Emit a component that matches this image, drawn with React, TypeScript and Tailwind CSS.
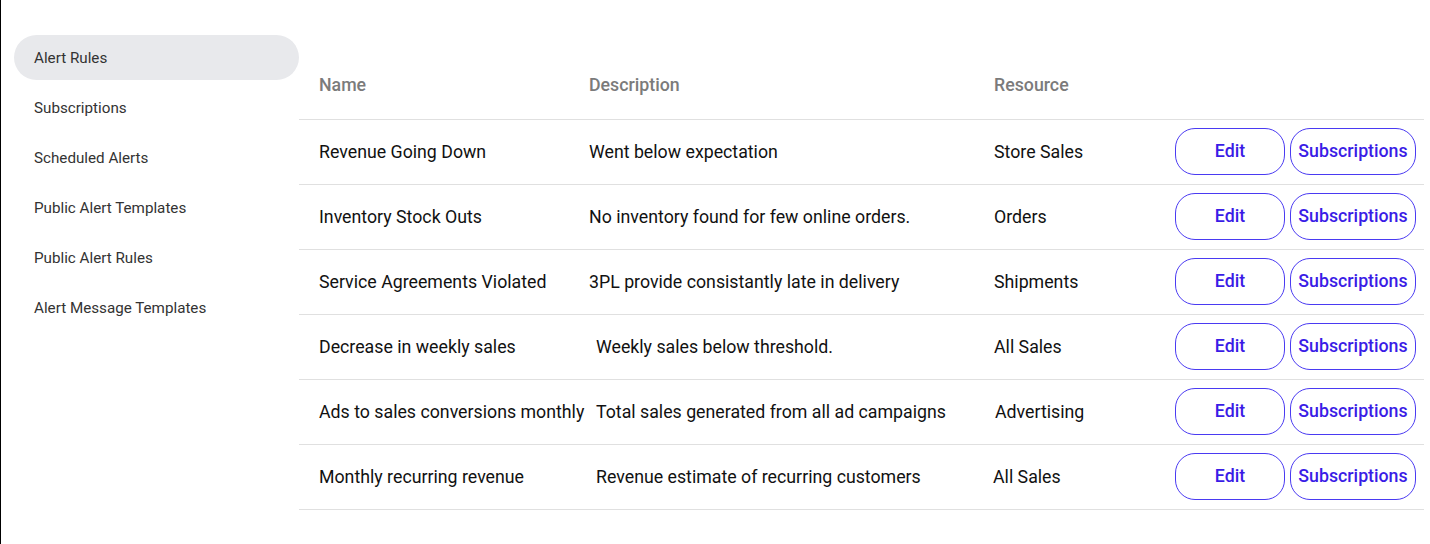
import React from 'react';

interface AlertRule {
  name: string;
  description: string;
  resource: string;
  descPad?: string;
  resPad?: string;
}

const navItems = [
  'Alert Rules',
  'Subscriptions',
  'Scheduled Alerts',
  'Public Alert Templates',
  'Public Alert Rules',
  'Alert Message Templates',
];

const rules: AlertRule[] = [
  { name: 'Revenue Going Down', description: 'Went below expectation', resource: 'Store Sales' },
  { name: 'Inventory Stock Outs', description: 'No inventory found for few online orders.', resource: 'Orders' },
  { name: 'Service Agreements Violated', description: '3PL provide consistantly late in delivery', resource: 'Shipments' },
  { name: 'Decrease in weekly sales', description: 'Weekly sales below threshold.', resource: 'All Sales', descPad: 'pl-[7px]' },
  { name: 'Ads to sales conversions monthly', description: 'Total sales generated from all ad campaigns', resource: 'Advertising', descPad: 'pl-[7px]', resPad: 'pl-[1px]' },
  { name: 'Monthly recurring revenue', description: 'Revenue estimate of recurring customers', resource: 'All Sales', descPad: 'pl-[7px]', resPad: '-ml-[1px]' },
];

export default function App() {
  const active = 'Alert Rules';

  return (
    <div className="min-h-[544px] flex bg-white border-l border-black" style={{ fontFamily: 'Roboto, "Noto Sans", sans-serif' }}>
      <aside className="w-[298px] shrink-0 pl-[13px] pt-[35px] flex flex-col gap-[5px]">
        {navItems.map(item => (
          <div key={item}
            className={'h-[45px] flex items-center pl-[20px] pt-[1px] rounded-full text-[15.2px] text-[#333] '
              + (item === active ? 'bg-[#e8e9ec] text-[#1f1f2e]' : '')}>
            {item}
          </div>
        ))}
      </aside>

      <main className="flex-1 pr-[6px] pt-[35px]">
        <div className="grid grid-cols-[290px_405px_181px_1fr] h-[85px] items-end pb-[20px] border-b border-[#e0e0e0] text-[17.75px] font-medium text-[#7b7b7b]">
          <div className="pl-[20px]">Name</div>
          <div>Description</div>
          <div>Resource</div>
          <div />
        </div>
        {rules.map(rule => (
          <div key={rule.name}
            className="grid grid-cols-[290px_405px_181px_1fr] h-[65px] items-center border-b border-[#e0e0e0] text-[17.75px] text-[#111]">
            <div className="pl-[20px] pt-[1px] whitespace-nowrap">{rule.name}</div>
            <div className={'pt-[1px] whitespace-nowrap ' + (rule.descPad || '')}>{rule.description}</div>
            <div className={'pt-[1px] whitespace-nowrap ' + (rule.resPad || '')}>{rule.resource}</div>
            <div className="flex gap-[5px] -mt-[1px]">
              <button className="w-[110px] h-[47px] rounded-[20px] border border-[#4a3af2] text-[#3a1ce6] text-[17.75px] font-medium">
                Edit
              </button>
              <button className="w-[126px] h-[47px] rounded-[20px] border border-[#4a3af2] text-[#3a1ce6] text-[17.75px] font-medium">
                Subscriptions
              </button>
            </div>
          </div>
        ))}
      </main>
    </div>
  );
}
